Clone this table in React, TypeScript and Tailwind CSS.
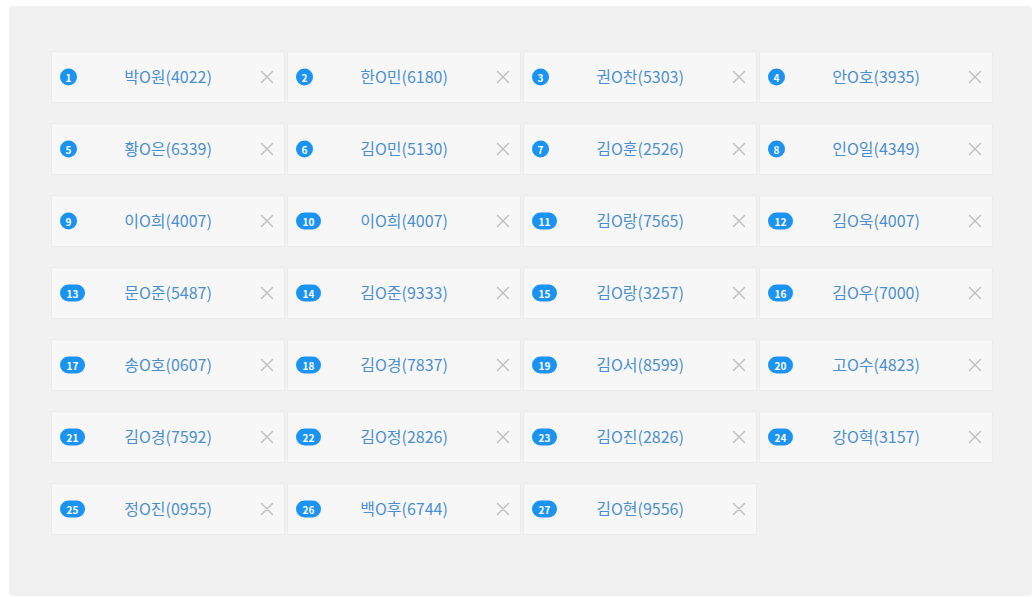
const people = [
  '박O원(4022)', '한O민(6180)', '권O찬(5303)', '안O호(3935)',
  '황O은(6339)', '김O민(5130)', '김O훈(2526)', '인O일(4349)',
  '이O희(4007)', '이O희(4007)', '김O랑(7565)', '김O욱(4007)',
  '문O준(5487)', '김O준(9333)', '김O랑(3257)', '김O우(7000)',
  '송O호(0607)', '김O경(7837)', '김O서(8599)', '고O수(4823)',
  '김O경(7592)', '김O정(2826)', '김O진(2826)', '강O혁(3157)',
  '정O진(0955)', '백O후(6744)', '김O현(9556)',
]

function CloseIcon() {
  return (
    <svg width="14" height="14" viewBox="0 0 14 14" fill="none" stroke="#c3c3c3" strokeWidth="1.5" strokeLinecap="round">
      <path d="M1.5 1.5 12.5 12.5M12.5 1.5 1.5 12.5" />
    </svg>
  )
}

export default function App() {
  return (
    <div className="min-h-screen bg-white pl-[9px] pt-[6px]" style={{ fontFamily: '"Noto Sans CJK KR", "Noto Sans", sans-serif' }}>
      <div className="h-[590px] w-[1023px] rounded-[4px] bg-[#f1f1f1] pl-[42px] pt-[45px]">
        <ul className="grid w-[942px] grid-cols-4 gap-x-[2px] gap-y-[20px]">
          {people.map((name, i) => (
            <li
              key={i}
              className="relative flex h-[52px] items-center justify-center rounded-[2px] border border-[#ececec] bg-[#f7f7f7] pb-[2px]"
            >
              <span
                className={`absolute left-[8px] top-1/2 flex h-[17px] -translate-y-1/2 items-center justify-center rounded-full bg-[#1b93f3] text-[10px] font-bold leading-none text-white ${
                  i + 1 < 10 ? 'w-[17px]' : 'w-[25px]'
                }`}
              >
                {i + 1}
              </span>
              <span className="text-[16px] leading-none text-[#4b8fd3]">{name}</span>
              <button type="button" className="absolute right-[10px] top-1/2 flex -translate-y-1/2 items-center">
                <CloseIcon />
              </button>
            </li>
          ))}
        </ul>
      </div>
    </div>
  )
}
